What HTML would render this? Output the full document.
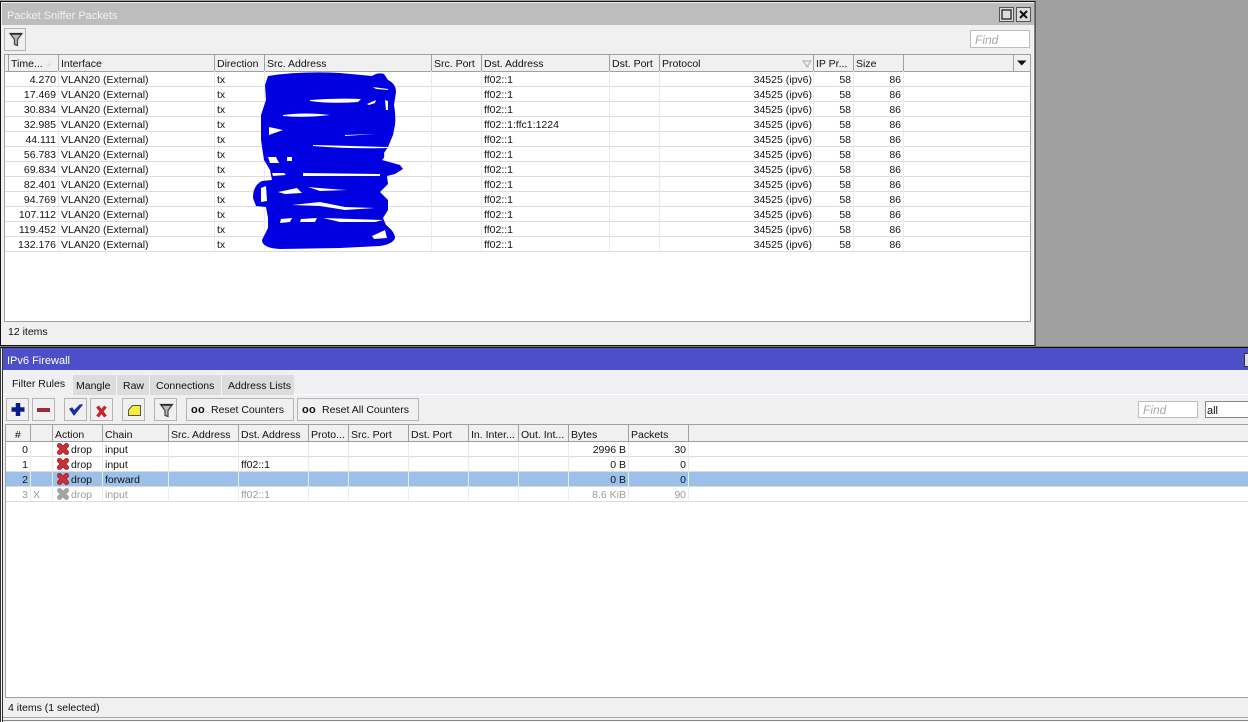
<!DOCTYPE html>
<html><head><meta charset="utf-8"><style>
html,body{margin:0;padding:0;background:#a0a0a0;width:1248px;height:722px;overflow:hidden}
svg{display:block}
text{font-family:"Liberation Sans",sans-serif;font-size:10.5px;fill:#111}
.r{text-anchor:end}
.g{fill:#9a9a9a}
.w{fill:#fff}
.f{fill:#a8a8a8;font-style:italic;font-size:12px}
.h{stroke:#a0a0a0;stroke-width:1;fill:none}
.l{stroke:#dcdcdc;stroke-width:1;fill:none}
.v{stroke:#ebebeb;stroke-width:1;fill:none}
.b{fill:#f0f0f0;stroke:#b4b4b4}
</style></head><body>
<svg width="1248" height="722" viewBox="0 0 1248 722" xmlns="http://www.w3.org/2000/svg">
<defs>
<g id="x"><path d="M2.500 2.500L9.500 9.500M9.500 2.500L2.500 9.500" fill="none" stroke="#8f2327" stroke-width="5" stroke-linecap="round"/><path d="M2.500 2.500L9.500 9.500M9.500 2.500L2.500 9.500" fill="none" stroke="#cc3036" stroke-width="3.400" stroke-linecap="round"/></g>
<g id="xg"><path d="M2.500 2.500L9.500 9.500M9.500 2.500L2.500 9.500" fill="none" stroke="#a4a4a4" stroke-width="5" stroke-linecap="round"/></g>
<g id="fn"><path d="M0.500 0.500H12.500L8 6.500V12.500L5 11.500V6.500Z" fill="#b4bac0" stroke="#444" stroke-width="1.200"/><path d="M1 1H12" stroke="#222" stroke-width="1.500"/></g>
</defs>
<rect width="1248" height="722" fill="#a0a0a0"/>

<!-- Upper window -->
<rect x="0.500" y="1.500" width="1034.500" height="344" fill="#f0f0f0" stroke="#111"/>
<rect x="2" y="3" width="1032" height="22" fill="#bdbdbd"/>
<text x="7" y="19" class="w" style="font-size:11px;opacity:.8">Packet Sniffer Packets</text>
<rect x="999.500" y="7.500" width="14" height="14" fill="#dcdcdc" stroke="#555"/>
<rect x="1002" y="10" width="9" height="9" fill="none" stroke="#222" stroke-width="1.300"/>
<rect x="1016.500" y="7.500" width="14" height="14" fill="#dcdcdc" stroke="#555"/>
<path d="M1020 11L1027 18M1027 11L1020 18" stroke="#111" stroke-width="2"/>

<rect x="4.500" y="28.500" width="21" height="22" class="b"/>
<use href="#fn" x="9.500" y="33"/>
<rect x="970.500" y="30.500" width="59" height="17" fill="#fff" stroke="#bdbdbd"/>
<text x="975" y="44" class="f">Find</text>

<rect x="4.500" y="54.500" width="1026" height="267" fill="#fff" stroke="#a0a0a0"/>
<rect x="5" y="55" width="1025" height="16" fill="#f0f0f0"/>
<path class="h" d="M5 71.500H1030M8.500 55V71M58.500 55V71M214.500 55V71M264.500 55V71M431.500 55V71M481.500 55V71M609.500 55V71M659.500 55V71M813.500 55V71M853.500 55V71M903.500 55V71M1013.500 55V71"/>
<text x="11" y="67">Time...</text><path d="M47 66l4-4v4z" fill="#ddd"/>
<text x="61" y="67">Interface</text>
<text x="217" y="67">Direction</text>
<text x="267" y="67">Src. Address</text>
<text x="434" y="67">Src. Port</text>
<text x="484" y="67">Dst. Address</text>
<text x="612" y="67">Dst. Port</text>
<text x="662" y="67">Protocol</text>
<path d="M803 61h8l-3 4v2l-2 -1v-1z" fill="none" stroke="#aaa"/>
<text x="816" y="67">IP Pr...</text>
<text x="856" y="67">Size</text>
<path d="M1017 60.500h9.500l-4.750 5z" fill="#111"/>

<path class="l" d="M5 86.500H1030M5 101.500H1030M5 116.500H1030M5 131.500H1030M5 146.500H1030M5 161.500H1030M5 176.500H1030M5 191.500H1030M5 206.500H1030M5 221.500H1030M5 236.500H1030M5 251.500H1030"/>
<path class="v" d="M58.500 71V251M214.500 71V251M264.500 71V251M431.500 71V251M481.500 71V251M609.500 71V251M659.500 71V251M813.500 71V251M853.500 71V251M903.500 71V251"/>

<g>
<text x="56" class="r" y="83">4.270</text><text x="61" y="83">VLAN20 (External)</text><text x="217" y="83">tx</text><text x="484" y="83">ff02::1</text><text x="812" class="r" y="83">34525 (ipv6)</text><text x="851" class="r" y="83">58</text><text x="901" class="r" y="83">86</text>
<text x="56" class="r" y="98">17.469</text><text x="61" y="98">VLAN20 (External)</text><text x="217" y="98">tx</text><text x="484" y="98">ff02::1</text><text x="812" class="r" y="98">34525 (ipv6)</text><text x="851" class="r" y="98">58</text><text x="901" class="r" y="98">86</text>
<text x="56" class="r" y="113">30.834</text><text x="61" y="113">VLAN20 (External)</text><text x="217" y="113">tx</text><text x="484" y="113">ff02::1</text><text x="812" class="r" y="113">34525 (ipv6)</text><text x="851" class="r" y="113">58</text><text x="901" class="r" y="113">86</text>
<text x="56" class="r" y="128">32.985</text><text x="61" y="128">VLAN20 (External)</text><text x="217" y="128">tx</text><text x="484" y="128">ff02::1:ffc1:1224</text><text x="812" class="r" y="128">34525 (ipv6)</text><text x="851" class="r" y="128">58</text><text x="901" class="r" y="128">86</text>
<text x="56" class="r" y="143">44.111</text><text x="61" y="143">VLAN20 (External)</text><text x="217" y="143">tx</text><text x="484" y="143">ff02::1</text><text x="812" class="r" y="143">34525 (ipv6)</text><text x="851" class="r" y="143">58</text><text x="901" class="r" y="143">86</text>
<text x="56" class="r" y="158">56.783</text><text x="61" y="158">VLAN20 (External)</text><text x="217" y="158">tx</text><text x="484" y="158">ff02::1</text><text x="812" class="r" y="158">34525 (ipv6)</text><text x="851" class="r" y="158">58</text><text x="901" class="r" y="158">86</text>
<text x="56" class="r" y="173">69.834</text><text x="61" y="173">VLAN20 (External)</text><text x="217" y="173">tx</text><text x="484" y="173">ff02::1</text><text x="812" class="r" y="173">34525 (ipv6)</text><text x="851" class="r" y="173">58</text><text x="901" class="r" y="173">86</text>
<text x="56" class="r" y="188">82.401</text><text x="61" y="188">VLAN20 (External)</text><text x="217" y="188">tx</text><text x="484" y="188">ff02::1</text><text x="812" class="r" y="188">34525 (ipv6)</text><text x="851" class="r" y="188">58</text><text x="901" class="r" y="188">86</text>
<text x="56" class="r" y="203">94.769</text><text x="61" y="203">VLAN20 (External)</text><text x="217" y="203">tx</text><text x="484" y="203">ff02::1</text><text x="812" class="r" y="203">34525 (ipv6)</text><text x="851" class="r" y="203">58</text><text x="901" class="r" y="203">86</text>
<text x="56" class="r" y="218">107.112</text><text x="61" y="218">VLAN20 (External)</text><text x="217" y="218">tx</text><text x="484" y="218">ff02::1</text><text x="812" class="r" y="218">34525 (ipv6)</text><text x="851" class="r" y="218">58</text><text x="901" class="r" y="218">86</text>
<text x="56" class="r" y="233">119.452</text><text x="61" y="233">VLAN20 (External)</text><text x="217" y="233">tx</text><text x="484" y="233">ff02::1</text><text x="812" class="r" y="233">34525 (ipv6)</text><text x="851" class="r" y="233">58</text><text x="901" class="r" y="233">86</text>
<text x="56" class="r" y="248">132.176</text><text x="61" y="248">VLAN20 (External)</text><text x="217" y="248">tx</text><text x="484" y="248">ff02::1</text><text x="812" class="r" y="248">34525 (ipv6)</text><text x="851" class="r" y="248">58</text><text x="901" class="r" y="248">86</text>
</g>

<!-- scribble -->
<path fill="#0000e0" d="M268 76Q300 71 340 73L372 76Q378 72 384 74L388 80Q396 84 396 92L394 105Q396 115 395 125L393 135L388 147L384 153Q385 158 382 160L400 165L403 169L395 174L387 176L388 184L380 192L388 200L388 210L383 218L386 225Q395 232 395 238Q393 244 380 246L340 248L280 249Q262 248 262 240L268 228L268 218L266 207L256 206L253 198Q253 185 262 181L272 180L270 170L264 160L261 140L261 115L266 100L265 85Z"/>
<g fill="#fff">
<path d="M310 100Q335 98 361 99L358 102Q330 104 310 101Z"/>
<path d="M367 104L376 100L375 103L369 105Z"/>
<path d="M385 100L388 101L388 110L386 110Z"/>
<path d="M373 87L388 89L388 90L376 89Z"/>
<path d="M283 115Q305 112 330 115Q305 118 283 116Z"/>
<path d="M269 127L283 130L269 135Z"/>
<path d="M345 135L375 134L345 136Z"/>
<path d="M313 145Q350 146 388 147L388 148Q350 149 313 146Z"/>
<path d="M268 157L276 157L279 163L270 163Z"/>
<rect x="287" y="157" width="5" height="4"/>
<path d="M303 173L380 174L380 176L303 176Z"/>
<path d="M272 173L284 173L286 175L273 176Z"/>
<path d="M278 192L297 188L302 193L285 194Z"/>
<path d="M308 187Q330 189 347 190L320 191Z"/>
<path d="M261 188L266 186L267 201L261 202Z"/>
<path d="M292 205L320 202L345 207L375 208L345 210L320 206Z"/>
<path d="M281 219L292 218L290 222L280 223Z"/>
<path d="M301 219L317 218L315 222L300 222Z"/>
<path d="M323 218L383 220L375 222L340 222Z"/>
<path d="M372 236L385 230L387 238L374 239Z"/>
</g>

<text x="8" y="335">12 items</text>
<path d="M5 321.500H1030" stroke="#a0a0a0"/>

<!-- Lower window -->
<rect x="0" y="348" width="1248" height="374" fill="#f0f0f0"/>
<path d="M0 347.500H1248" stroke="#111" stroke-width="1.500"/>
<path d="M0.500 347V722M2.500 348V722" stroke="#333" stroke-width="1" fill="none"/>
<rect x="3" y="348" width="1245" height="22" fill="#4c4fc8"/>
<text x="7" y="364" class="w" style="font-size:11px">IPv6 Firewall</text>
<rect x="1244.500" y="353.500" width="6" height="13" fill="#ddd" stroke="#333"/>

<!-- tabs -->
<rect x="3" y="370" width="1245" height="25" fill="#eef0f4"/>
<path d="M3 394.500H1248" stroke="#fff"/>
<rect x="72" y="375" width="222" height="20" fill="#dcdcdc"/>
<path d="M116.500 375V395M149.500 375V395M221.500 375V395M72.500 373V395" stroke="#f4f4f4" fill="none"/>
<rect x="7" y="373" width="65" height="22" fill="#f0f0f0"/>
<text x="12" y="387">Filter Rules</text>
<text x="76" y="389">Mangle</text>
<text x="123" y="389">Raw</text>
<text x="156" y="389">Connections</text>
<text x="228" y="389">Address Lists</text>

<!-- toolbar -->
<rect x="6.500" y="398.500" width="22" height="22" class="b"/>
<path d="M18 403V416M11.500 409.500H24.500" stroke="#0a1a8c" stroke-width="4.500"/>
<rect x="32.500" y="398.500" width="22" height="22" class="b"/>
<rect x="37" y="408" width="13" height="4" fill="#a3283a"/>
<rect x="64.500" y="398.500" width="22" height="22" class="b"/>
<path d="M70 409L74 415L82 405L80 405L74 411L72 408Z" fill="#1a2fa8" stroke="#1a2fa8" stroke-width="1.200"/>
<rect x="90.500" y="398.500" width="22" height="22" class="b"/>
<path d="M97.500 406.500L105.500 416.500M105.500 406.500L97.500 416.500" fill="none" stroke="#c8242c" stroke-width="3.400"/>
<rect x="122.500" y="398.500" width="22" height="22" class="b"/>
<path d="M128.500 410L132.500 405.500H140.500V415.500H128.500Z" fill="#f7ec3a" stroke="#555"/>
<rect x="154.500" y="398.500" width="22" height="22" class="b"/>
<use href="#fn" x="160" y="404"/>
<rect x="186.500" y="398.500" width="107" height="22" class="b"/>
<text x="191" y="413" style="font-weight:bold;font-size:11px;letter-spacing:.3px">oo</text>
<text x="211" y="413">Reset Counters</text>
<rect x="297.500" y="398.500" width="121" height="22" class="b"/>
<text x="302" y="413" style="font-weight:bold;font-size:11px;letter-spacing:.3px">oo</text>
<text x="322" y="413">Reset All Counters</text>
<rect x="1138.500" y="401.500" width="59" height="16" fill="#fff" stroke="#bdbdbd"/>
<text x="1143" y="414" class="f">Find</text>
<rect x="1205.500" y="401.500" width="50" height="16" fill="#fff" stroke="#888"/>
<text x="1207" y="414" style="font-size:11px">all</text>

<!-- table -->
<rect x="5.500" y="424.500" width="1250" height="273" fill="#fff" stroke="#a0a0a0"/>
<rect x="6" y="425" width="1242" height="16" fill="#f0f0f0"/>
<rect x="6" y="471.500" width="1242" height="15" fill="#9dc0ea"/>
<path class="l" d="M6 456.500H1248M6 471.500H1248M6 486.500H1248M6 501.500H1248"/>
<path class="v" d="M30.500 441V501M52.500 441V501M102.500 441V501M168.500 441V501M238.500 441V501M308.500 441V501M348.500 441V501M408.500 441V501M468.500 441V501M518.500 441V501M568.500 441V501M628.500 441V501M688.500 441V501"/>
<path class="h" d="M6 441.500H1248M30.500 425V441M52.500 425V441M102.500 425V441M168.500 425V441M238.500 425V441M308.500 425V441M348.500 425V441M408.500 425V441M468.500 425V441M518.500 425V441M568.500 425V441M628.500 425V441M688.500 425V441"/>
<text x="15" y="438">#</text>
<text x="55" y="438">Action</text>
<text x="105" y="438">Chain</text>
<text x="171" y="438">Src. Address</text>
<text x="241" y="438">Dst. Address</text>
<text x="311" y="438">Proto...</text>
<text x="351" y="438">Src. Port</text>
<text x="411" y="438">Dst. Port</text>
<text x="471" y="438">In. Inter...</text>
<text x="521" y="438">Out. Int...</text>
<text x="571" y="438">Bytes</text>
<text x="631" y="438">Packets</text>

<text x="28" class="r" y="453">0</text><use href="#x" x="57" y="443"/><text x="71" y="453">drop</text><text x="105" y="453">input</text><text x="626" class="r" y="453">2996 B</text><text x="686" class="r" y="453">30</text>
<text x="28" class="r" y="468">1</text><use href="#x" x="57" y="458"/><text x="71" y="468">drop</text><text x="105" y="468">input</text><text x="241" y="468">ff02::1</text><text x="626" class="r" y="468">0 B</text><text x="686" class="r" y="468">0</text>
<text x="28" class="r" y="483">2</text><use href="#x" x="57" y="473"/><text x="71" y="483">drop</text><text x="105" y="483">forward</text><text x="626" class="r" y="483">0 B</text><text x="686" class="r" y="483">0</text>
<text x="28" class="r g" y="498">3</text><text x="33" class="g" y="498">X</text><use href="#xg" x="57" y="488"/><text x="71" class="g" y="498">drop</text><text x="105" class="g" y="498">input</text><text x="241" class="g" y="498">ff02::1</text><text x="626" class="r g" y="498">8.6 KiB</text><text x="686" class="r g" y="498">90</text>

<path d="M6 697.500H1248" stroke="#a0a0a0"/>
<text x="8" y="711">4 items (1 selected)</text>
<path d="M3 717.500H1248" stroke="#a8a8a8"/>
<path d="M3 720.500H1248" stroke="#888"/>
</svg>
</body></html>
